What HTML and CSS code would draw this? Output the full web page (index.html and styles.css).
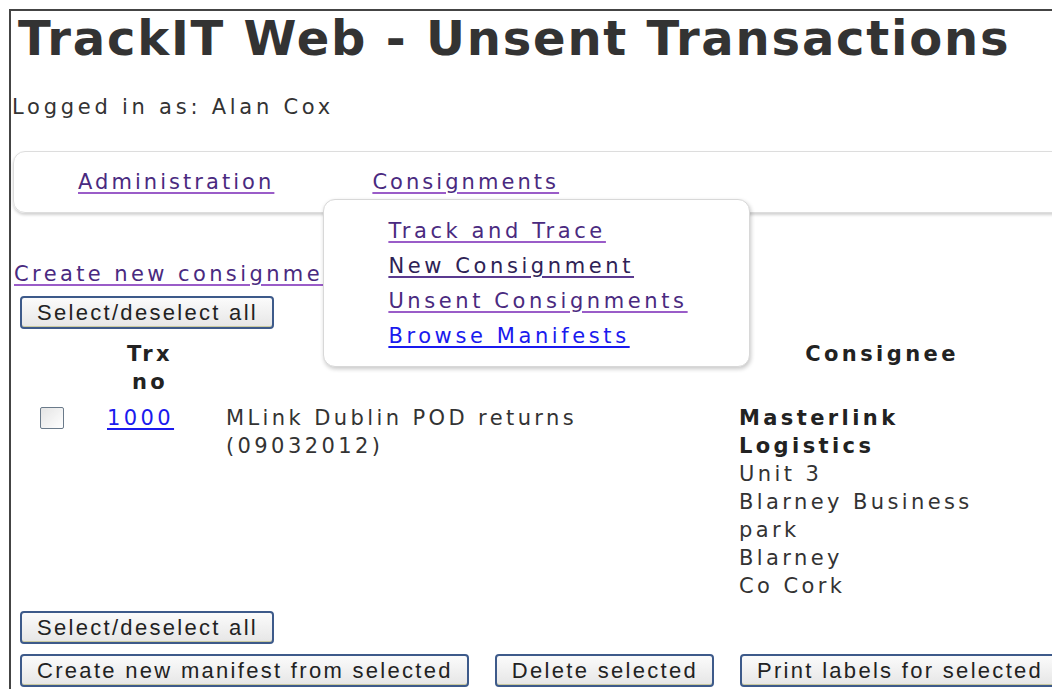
FILE: index.html
```html
<!DOCTYPE html>
<html lang="en">
<head>
<meta charset="utf-8">
<title>TrackIT Web - Unsent Transactions</title>
<link rel="stylesheet" href="styles.css">
</head>
<body>
<div class="page">
  <h1 class="title">TrackIT Web - Unsent Transactions</h1>
  <p class="login">Logged in as: Alan Cox</p>

  <nav class="menubar">
    <a class="menu-link" href="#">Administration</a>
    <div class="menu-item">
      <a class="menu-link" href="#">Consignments</a>
      <ul class="dropdown">
        <li><a class="drop-link visited" href="#">Track and Trace</a></li>
        <li><a class="drop-link visited dark" href="#">New Consignment</a></li>
        <li><a class="drop-link visited" href="#">Unsent Consignments</a></li>
        <li><a class="drop-link fresh" href="#">Browse Manifests</a></li>
      </ul>
    </div>
  </nav>

  <a class="create-link" href="#">Create new consignment</a>

  <form class="tx-form">
    <div class="btn-row"><button type="button" class="btn">Select/deselect all</button></div>
    <table class="tx-table">
      <thead>
        <tr>
          <th class="col-check"></th>
          <th class="col-trx">Trx<br>no</th>
          <th class="col-desc"></th>
          <th class="col-cons">Consignee</th>
        </tr>
      </thead>
      <tbody>
        <tr>
          <td class="col-check"><span class="checkbox"></span></td>
          <td class="col-trx"><a class="trx-link" href="#">1000</a></td>
          <td class="col-desc">MLink Dublin POD returns (09032012)</td>
          <td class="col-cons"><strong>Masterlink Logistics</strong><br>Unit 3<br>Blarney Business park<br>Blarney<br>Co Cork</td>
        </tr>
      </tbody>
    </table>
    <div class="btn-row"><button type="button" class="btn">Select/deselect all</button></div>
    <div class="btn-row actions">
      <button type="button" class="btn">Create new manifest from selected</button>
      <button type="button" class="btn">Delete selected</button>
      <button type="button" class="btn">Print labels for selected</button>
    </div>
  </form>
</div>
</body>
</html>
```

FILE: styles.css
```css
html, body {
  margin: 0;
  padding: 0;
  background: #fff;
  overflow: hidden;
}

body {
  font-family: "DejaVu Sans", Verdana, sans-serif;
  font-size: 21px;
  letter-spacing: 3.4px;
  color: #333;
}

/* framed page area: dark rule along the top and left edges */
.page {
  margin: 9px 0 0 9px;
  border-top: 2px solid #444;
  border-left: 2px solid #444;
  height: 700px;
  position: relative;
}

.title {
  margin: 0;
  padding: 0 0 0 7px;
  font-family: "DejaVu Sans", Verdana, sans-serif;
  font-weight: bold;
  font-size: 48px;
  letter-spacing: 1.8px;
  line-height: 54px;
  color: #333;
  white-space: nowrap;
}

.login {
  margin: 28px 0 0 1px;
  line-height: 28px;
  letter-spacing: 3.75px;
}

.menubar {
  margin: 30px -40px 0 2px;
  height: 60px;
  border: 1px solid #ddd;
  border-radius: 12px;
  box-shadow: 0 2px 3px rgba(0, 0, 0, 0.18);
  display: flex;
  align-items: center;
  gap: 98px;
  padding-left: 64px;
  position: relative;
  z-index: 2;
}

.menu-link {
  color: #4a2a80;
  text-decoration-color: #9a5cc8;
  text-underline-offset: 3px;
  line-height: 28px;
  letter-spacing: 3.05px;
}

.menu-item {
  position: relative;
}

.dropdown {
  position: absolute;
  left: -49px;
  top: 31px;
  width: 427px;
  margin: 0;
  padding: 14px 0 12px 64px;
  box-sizing: border-box;
  list-style: none;
  background: #fff;
  border: 1px solid #d8d8d8;
  border-radius: 12px;
  box-shadow: 1px 2px 4px rgba(0, 0, 0, 0.22);
}

.dropdown li {
  line-height: 35px;
}

.drop-link {
  text-underline-offset: 3px;
  letter-spacing: 3.6px;
}

.drop-link.visited {
  color: #4a2a80;
  text-decoration-color: #9a5cc8;
}

.drop-link.dark {
  color: #2e2255;
  text-decoration-color: #5a3a90;
}

.drop-link.fresh {
  color: #1a1aee;
}

.create-link {
  display: inline-block;
  margin: 47px 0 0 3px;
  line-height: 28px;
  color: #4a2a80;
  text-decoration-color: #9a5cc8;
  text-underline-offset: 3px;
  white-space: nowrap;
}

.tx-form {
  margin: 8px 0 0 0;
}

.btn-row {
  display: flex;
  gap: 26px;
  padding-left: 9px;
}

.btn {
  flex: none;
  white-space: nowrap;
  font-family: "Liberation Sans", Arial, sans-serif;
  font-size: 22px;
  letter-spacing: 2.3px;
  color: #222;
  height: 33px;
  padding: 0 14px 0 15px;
  background: linear-gradient(#fbfbfb, #e6e6e6);
  border: 2px solid #3d5a8a;
  border-radius: 4px;
  box-shadow: inset 0 -1px 0 #c9c9a0;
}

.tx-table {
  border-collapse: collapse;
  margin: 11px 0 11px 0;
}

.tx-table th,
.tx-table td {
  padding: 0;
  vertical-align: top;
  line-height: 28px;
}

.tx-table th {
  font-weight: bold;
  text-align: center;
  color: #222;
  padding-bottom: 8px;
}

.col-check { width: 96px; }
.col-trx { width: 86px; }
.tx-table .col-desc { width: 473px; padding: 0 40px 0 33px; text-align: left; }
.col-cons { width: 286px; }

.tx-table td.col-cons strong {
  color: #222;
}

.checkbox {
  display: block;
  width: 22px;
  height: 20px;
  margin: 3px 0 0 29px;
  border: 1px solid #6a7a8a;
  border-radius: 2px;
  background: linear-gradient(135deg, #e4e4e4, #fff);
}

.trx-link {
  display: block;
  color: #1a1aee;
  text-underline-offset: 3px;
}

.actions {
  margin-top: 10px;
}
```
